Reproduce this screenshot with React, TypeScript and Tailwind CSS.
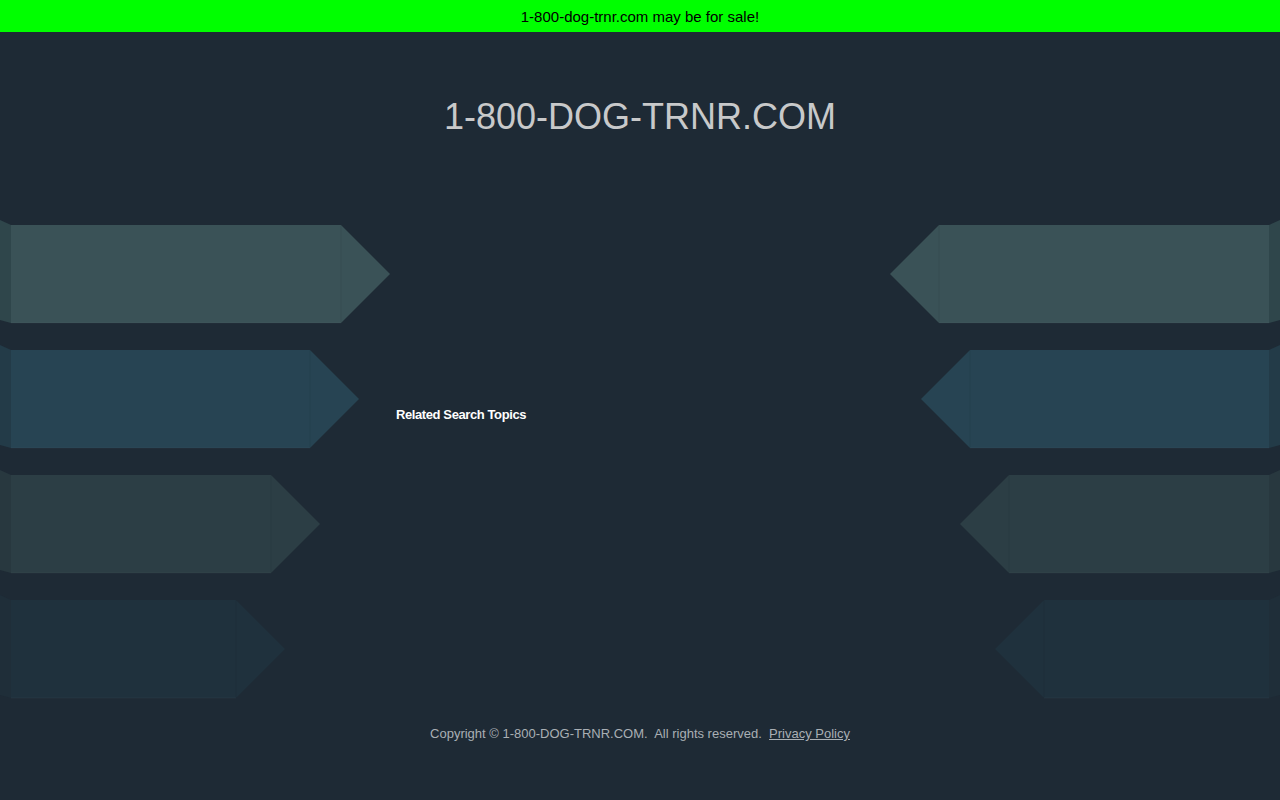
import React from 'react';

interface ArrowProps {
  width: number;
  fill: string;
  edge: string;
  flip?: boolean;
}

// one decorative banner shape; right-hand ones are mirrored
function Arrow({ width, fill, edge, flip }: ArrowProps) {
  const tip = width - 49;
  return (
    <svg
      width={width}
      height={108}
      viewBox={`0 0 ${width} 108`}
      className={flip ? '-scale-x-100 block' : 'block'}
    >
      <polygon points="0,0 11,5 11,103 0,100" fill={edge} />
      <polygon points={`11,5 ${tip},5 ${width},54 ${tip},103 11,103`} fill={fill} />
      <line x1={tip} y1={5} x2={tip} y2={103} stroke="#000" strokeOpacity={0.06} strokeWidth={1} />
      <line x1={11} y1={103} x2={tip} y2={103} stroke="#fff" strokeOpacity={0.03} strokeWidth={1} />
    </svg>
  );
}

const rows = [
  { width: 390, fill: '#3a5257', edge: '#2f464b' },
  { width: 359, fill: '#274453', edge: '#233b48' },
  { width: 320, fill: '#2c3e45', edge: '#28383f' },
  { width: 285, fill: '#1f313d', edge: '#1f2e39' },
];

export default function App() {
  return (
    <div className="min-h-screen bg-[#1e2a35] font-['Liberation_Sans',Arial,sans-serif]">
      <div className="h-8 bg-[#00ff00] flex items-center justify-center text-black text-[15px] leading-5 pt-[2px]">
        1-800-dog-trnr.com may be for sale!
      </div>

      <div className="h-[188px] pt-[63px] text-center">
        <h1 className="text-[36px] leading-[44px] text-[#c8c9ca]">1-800-DOG-TRNR.COM</h1>
      </div>

      <div className="flex">
        <div className="w-[390px] flex flex-col gap-[17px]">
          {rows.map((r) => (
            <Arrow key={r.width} width={r.width} fill={r.fill} edge={r.edge} />
          ))}
        </div>

        <div className="flex-1 pl-[6px] pt-[187px]">
          <p className="text-[13px] leading-4 tracking-[-0.4px] font-bold text-white">Related Search Topics</p>
        </div>

        <div className="w-[390px] flex flex-col items-end gap-[17px]">
          {rows.map((r) => (
            <Arrow key={r.width} width={r.width} fill={r.fill} edge={r.edge} flip />
          ))}
        </div>
      </div>

      <div className="pt-[23px] pb-10 text-center text-[13px] leading-4 text-[#a9afb4]">
        Copyright © 1-800-DOG-TRNR.COM.&nbsp; All rights reserved.&nbsp;{' '}
        <a href="#" className="underline">
          Privacy Policy
        </a>
      </div>
    </div>
  );
}
